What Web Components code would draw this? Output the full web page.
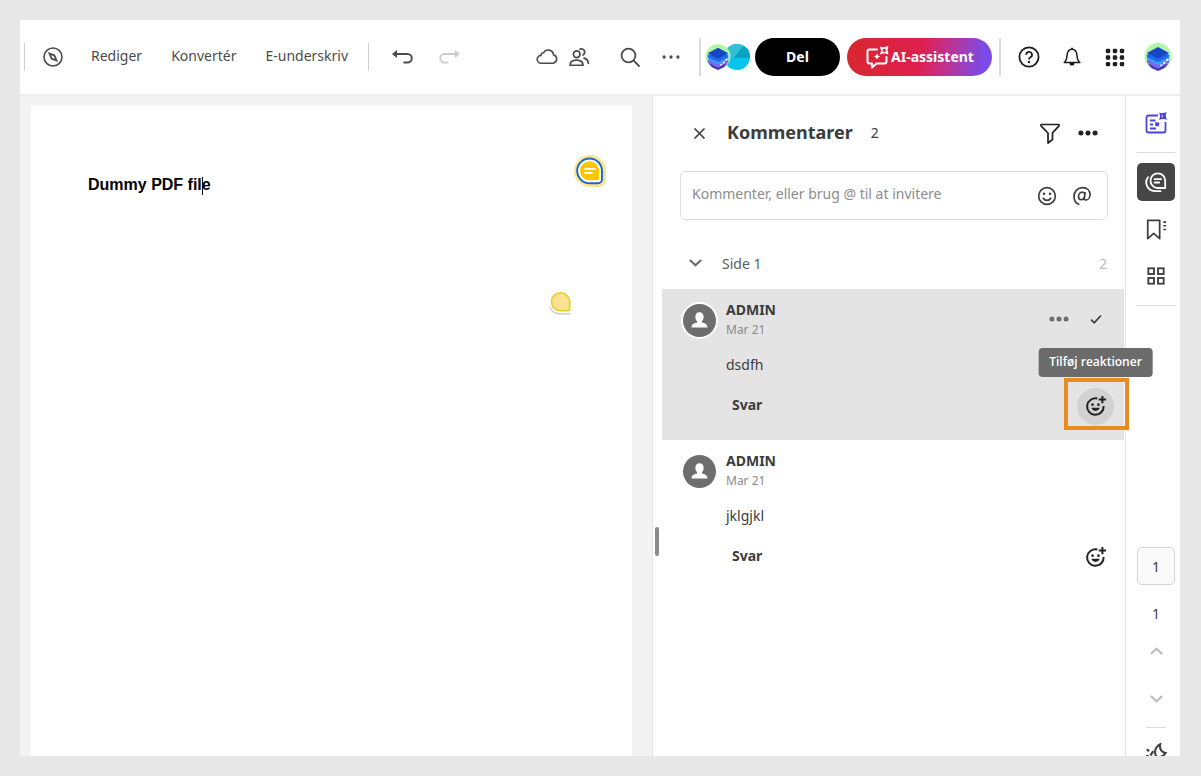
<!DOCTYPE html>
<html lang="da">
<head>
<meta charset="utf-8">
<meta name="viewport" content="width=device-width, initial-scale=1">
<title>Dummy PDF file</title>
<style>
    * { box-sizing: border-box; }
    body {
        margin: 0;
        background: #e8e8e8;
        color: #3c3c3c;
        font: 14px/20px "Noto Sans", "Open Sans", sans-serif;
    }
</style>
</head>
<body>
<pdf-app>
    <top-bar slot="top"></top-bar>
    <doc-viewer slot="viewer">Dummy PDF file</doc-viewer>
    <comment-panel slot="panel" heading="Kommentarer" count="2">
        <comment-card author="ADMIN" date="Mar 21" selected>dsdfh</comment-card>
        <comment-card author="ADMIN" date="Mar 21">jklgjkl</comment-card>
    </comment-panel>
    <side-rail slot="rail"></side-rail>
</pdf-app>

<script>
    const ICONS = {
        compass: `<g fill="none" stroke="currentColor" stroke-width="1.6"><circle cx="12" cy="12" r="9"/><path d="M8.500 8.500l4.800 1.800 2.200 5.200-4.800-1.800z" stroke-width="1.800"/></g>`,
        undo: `<path d="M6 9h11.500a3.900 3.900 0 0 1 0 8.600h-4" fill="none" stroke="currentColor" stroke-width="2"/><path d="M2 9l5-4v8z" fill="currentColor"/>`,
        redo: `<path d="M18 9H6.500a3.900 3.900 0 0 0 0 8.600h4" fill="none" stroke="currentColor" stroke-width="1.800"/><path d="M22 9l-5-4v8z" fill="currentColor"/>`,
        cloud: `<path d="M6.300 18.200a3.900 3.900 0 0 1-.4-7.800 3 3 0 0 1 2.700-2.600 5.300 5.300 0 0 1 9.900 1.900 4.400 4.400 0 0 1-.2 8.500z" fill="none" stroke="currentColor" stroke-width="1.600"/>`,
        people: `<g fill="none" stroke="currentColor" stroke-width="1.900" stroke-linecap="round"><circle cx="9.500" cy="9" r="3.600"/><path d="M2.200 21c0-3.600 3-5.600 7.100-5.600s7.100 2 7.100 5.600z" stroke-linejoin="round"/><path d="M13 3.600a3.500 3.500 0 1 1 3.400 6.200M17.600 13.300c2.800.8 4.300 2.600 4.600 5.700"/></g>`,
        search: `<g fill="none" stroke="currentColor" stroke-width="1.800" stroke-linecap="round"><circle cx="10.500" cy="10.500" r="6.900"/><path d="M15.700 15.700l5.300 5.300"/></g>`,
        dots: `<g fill="currentColor"><circle cx="4.500" cy="12" r="1.800"/><circle cx="12" cy="12" r="1.800"/><circle cx="19.500" cy="12" r="1.800"/></g>`,
        more: `<g fill="currentColor"><circle cx="3.500" cy="12" r="3"/><circle cx="12" cy="12" r="3"/><circle cx="20.500" cy="12" r="3"/></g>`,
        help: `<circle cx="12" cy="12" r="9.600" fill="none" stroke="currentColor" stroke-width="1.800"/><path d="M9.200 9.800a2.900 2.900 0 1 1 4.200 2.500c-1 .5-1.400 1-1.400 2.200" fill="none" stroke="currentColor" stroke-width="1.800"/><circle cx="12" cy="17" r="1.200" fill="currentColor"/>`,
        bell: `<path d="M3.500 18c2.500-2 2.800-4.400 3.100-7.600C6.900 6.400 9 3.600 12 3.600s5.100 2.800 5.400 6.800c.3 3.200.6 5.600 3.100 7.600z" fill="none" stroke="currentColor" stroke-width="1.700" stroke-linejoin="round"/><path d="M9.200 18.500h5.600a2.800 2.800 0 0 1-5.600 0z" fill="currentColor"/><path d="M12 2v1.600" stroke="currentColor" stroke-width="2"/>`,
        apps: `<g fill="currentColor"><rect x="2" y="3" width="4.800" height="4.800" rx="1.500"/><rect x="9.600" y="3" width="4.800" height="4.800" rx="1.500"/><rect x="17.200" y="3" width="4.800" height="4.800" rx="1.500"/><rect x="2" y="10.200" width="4.800" height="4.800" rx="1.500"/><rect x="9.600" y="10.200" width="4.800" height="4.800" rx="1.500"/><rect x="17.200" y="10.200" width="4.800" height="4.800" rx="1.500"/><rect x="2" y="17.400" width="4.800" height="4.800" rx="1.500"/><rect x="9.600" y="17.400" width="4.800" height="4.800" rx="1.500"/><rect x="17.200" y="17.400" width="4.800" height="4.800" rx="1.500"/></g>`,
        stack: `<circle cx="12" cy="11.500" r="11.500" fill="#b4f5a8"/><path d="M3.500 18l8.500-4 8.500 4-3 3.500-5.500 2.500-5.500-2.500z" fill="#4a30b8"/><path d="M2.500 15l9.500-4.500 9.500 4.500v2L12 22l-9.500-5z" fill="#7a68ee"/><path d="M2.500 12l9.500-4.500 9.500 4.500v2L12 19l-9.500-5z" fill="#3aa0fb"/><path d="M3.500 9.500h17l1 1V12L12 16.500 2.500 12v-1.500z" fill="#2168ee"/><path d="M2.500 8.500L12 3.500l9.500 5L12 13.500z" fill="#1646c4"/><path d="M16.500 16.800l1.800-.9v1.600l-1.800.9zM19 14.200l1.800-.9v1.600l-1.800.9zM14 18.700l1.600-.8v1.400l-1.600.8z" fill="#fff"/>`,
        pie: `<circle cx="12" cy="12" r="12" fill="#08c5ee"/><path d="M0 12A12 12 0 0 1 18 1.600L9 13z" fill="#35bfd6"/><path d="M9 13h15A12 12 0 0 0 18 1.600z" fill="#08a2c2"/>`,
        spark: `<g fill="none" stroke="currentColor" stroke-width="2" stroke-linecap="round" stroke-linejoin="round"><path d="M12 4.500H4.500a2 2 0 0 0-2 2v10a2 2 0 0 0 2 2H7v4l4.500-4h8a2 2 0 0 0 2-2V12"/><path d="M16 2.500q3 1.500 6.500-.5-2 3 0 6.500-3-2-6.500 0 2-3 0-6z" stroke-width="1.700"/></g><path d="M12 8.500q.7 2.300 3 3-2.300.7-3 3-.7-2.300-3-3 2.300-.7 3-3z" fill="currentColor"/>`,
        summary: `<g fill="none" stroke="currentColor" stroke-width="1.800"><path d="M14 4.500H4.500a2 2 0 0 0-2 2v13a2 2 0 0 0 2 2h15a2 2 0 0 0 2-2V11"/><path d="M6 9.500h5.500M6 13.500h3M6 17.500h6"/></g><path d="M15 1.500q3.500 1.500 7.500-.5-1.500 3.500.5 8-4-2-8 0 2-4 0-7.500zM11.500 11l4 .8-.8 3.700-3.700-.8z" fill="currentColor"/><path d="M18.200 4.200v2" stroke="#fff"/>`,
        close: `<path d="M4 4l16 16M20 4L4 20" fill="none" stroke="currentColor" stroke-width="2.600"/>`,
        filter: `<path d="M3 3.500h18v1.400l-6.500 7v6.600l-4.500 3.500v-10L3 4.900z" fill="none" stroke="currentColor" stroke-width="1.700" stroke-linejoin="round"/>`,
        smile: `<g fill="none" stroke="currentColor" stroke-width="2"><circle cx="12" cy="12" r="10"/><path d="M7.500 14.700a5.200 5.200 0 0 0 9 0" stroke-linecap="round"/></g><circle cx="8.400" cy="9.300" r="1.500" fill="currentColor"/><circle cx="15.600" cy="9.300" r="1.500" fill="currentColor"/>`,
        mention: `<path d="M15.800 8.200l-1 6c-.3 1.800.5 2.600 1.800 2.600 2.600 0 5-2.600 5-6.400 0-5-3.600-8.400-8.800-8.400C6.900 2 2.400 6.500 2.400 12.400c0 4.700 2.400 8.300 5.600 9.600M15.600 9.800c-.5-1.500-1.700-2.400-3.300-2.400-2.700 0-4.500 2.400-4.500 5.200 0 2.300 1.300 3.900 3.200 3.900 2 0 3.700-1.600 4.100-4" fill="none" stroke="currentColor" stroke-width="2" stroke-linecap="round"/>`,
        react: `<g fill="none" stroke="currentColor" stroke-width="2.200"><path d="M13.500 3.900A9 9 0 1 0 20.300 12"/><path d="M19 1v8M15 5h8"/></g><path d="M7 14h9a4.700 4.700 0 0 1-9 0z" fill="currentColor"/><circle cx="8.200" cy="10.500" r="1.400" fill="currentColor"/><circle cx="14.700" cy="10.500" r="1.400" fill="currentColor"/>`,
        down: `<path d="M3 8l9 8.500L21 8" fill="none" stroke="currentColor" stroke-width="3.600"/>`,
        up: `<path d="M3 16l9-8.500L21 16" fill="none" stroke="currentColor" stroke-width="3.600"/>`,
        check: `<path d="M3.500 13l5.500 5.500L20.500 6" fill="none" stroke="currentColor" stroke-width="3"/>`,
        person: `<circle cx="12" cy="12" r="12" fill="#6e6e6e"/><path d="M12 6c2 0 3 1.500 3 3.400 0 1.300-.5 2.400-1.200 3v1c2.200.5 4 1.200 4 3.600H6.200c0-2.400 1.800-3.100 4-3.600v-1C9.500 11.800 9 10.700 9 9.400 9 7.500 10 6 12 6z" fill="#fff"/>`,
        bubbles: `<g fill="none" stroke="currentColor" stroke-width="2"><path d="M14 2.500a8 8 0 1 0 0 16h8v-8a8 8 0 0 0-8-8z"/><path d="M10.500 8.800h7M10.500 12.500h5" stroke-linecap="round"/><path d="M3.300 6.800A9.500 9.500 0 0 0 10.500 22h6.500" stroke-linecap="round"/></g>`,
        bookmark: `<path d="M3 2.500h13v20l-6.500-5.700L3 22.500z" fill="none" stroke="currentColor" stroke-width="1.900" stroke-linejoin="round"/><path d="M20 4.500h3M20 8.500h3M20 12.500h3" stroke="currentColor" stroke-width="1.800"/>`,
        thumbs: `<g fill="none" stroke="currentColor" stroke-width="2.200"><rect x="2.800" y="2.800" width="6.800" height="6.800"/><rect x="14.400" y="2.800" width="6.800" height="6.800"/><rect x="2.800" y="14.400" width="6.800" height="6.800"/><rect x="14.400" y="14.400" width="6.800" height="6.800"/></g>`,
        night: `<path d="M12 15.500C9.500 9.500 12 4.500 16.500 2.500c-.8 5 1.200 8.500 6 9.500-2.500 3.800-7 5.500-10.500 3.500z" fill="none" stroke="currentColor" stroke-width="2.200"/><path d="M2 8l2.500 2M6 14.500L9 10M1 15.500h3" stroke="currentColor" stroke-width="2.400"/>`,
        note: `<path d="M17 1a16 16 0 0 0 0 32h9a7 7 0 0 0 7-7v-9A16 16 0 0 0 17 1z" fill="#fbe68e"/><path d="M16.500 4.500a12.300 12.300 0 0 0 0 24.700h8.500a4 4 0 0 0 4-4v-8.500A12.500 12.500 0 0 0 16.500 4.500z" fill="#fff" stroke="#1868d0" stroke-width="1.900"/><path d="M16.500 7.300a9.500 9.500 0 0 0 0 19h7.500a2.200 2.200 0 0 0 2.200-2.200v-7.500a9.700 9.700 0 0 0-9.700-9.300z" fill="#fbc800"/><path d="M12 14.800h10M12 18.800h7" stroke="#fff" stroke-width="1.800" stroke-linecap="round"/>`,
        notePale: `<path d="M5 19a10.500 10.500 0 0 0 10 8.500h11.500V25H15z" fill="#bdbdbd"/><path d="M16 3.800a11.200 11.200 0 1 0 0 22.400h11V15A11 11 0 0 0 16 3.800z" fill="#fff"/><path d="M16.500 5.800a9 9 0 0 0 0 18H24a1.700 1.700 0 0 0 1.700-1.700v-7.300a9.200 9.200 0 0 0-9.200-9z" fill="#fbe293" stroke="#e8cd28" stroke-width="1.600"/>`
    };

    const ICON_BUTTON = `
        button {
            display: inline-flex; align-items: center; justify-content: center;
            margin: 0; padding: 0; border: 0; background: none;
            color: inherit; font: inherit; cursor: pointer;
        }
    `;

    // <ui-icon name="bell" size="24">
    class UiIcon extends HTMLElement {
        constructor() {
            super();
            this.attachShadow({ mode: "open" });
        }
        connectedCallback() {
            const name = this.getAttribute("name");
            const size = this.getAttribute("size") || 24;
            const box = this.getAttribute("box") || 24;
            this.shadowRoot.innerHTML = `
                <style>
                    :host { display: inline-flex; flex: none; }
                    svg { display: block; }
                </style>
                <svg width="${size}" height="${size}" viewBox="0 0 ${box} ${box}" aria-hidden="true">${ICONS[name] || ""}</svg>
            `;
        }
    }

    class PdfApp extends HTMLElement {
        constructor() {
            super();
            this.attachShadow({ mode: "open" });
            this.shadowRoot.innerHTML = `
                <style>
                    :host {
                        display: flex; height: 100vh; padding: 20px 21px 20px 20px;
                        box-sizing: border-box;
                    }
                    .window {
                        flex: 1; min-width: 0; display: flex; flex-direction: column;
                        background: #fff; overflow: hidden;
                    }
                    main {
                        flex: 1; min-height: 0; display: grid;
                        grid-template-columns: minmax(0, 1fr) 473px 55px;
                    }
                </style>
                <div class="window">
                    <slot name="top"></slot>
                    <main>
                        <slot name="viewer"></slot>
                        <slot name="panel"></slot>
                        <slot name="rail"></slot>
                    </main>
                </div>
            `;
        }
    }

    class TopBar extends HTMLElement {
        constructor() {
            super();
            this.attachShadow({ mode: "open" });
        }
        connectedCallback() {
            const links = ["Rediger", "Konvertér", "E-underskriv"];
            this.shadowRoot.innerHTML = `
                <style>
                    :host { display: block; border-bottom: 2px solid #eee; }
                    ${ICON_BUTTON}
                    header {
                        display: flex; align-items: center; justify-content: space-between;
                        height: 74px; padding: 0 1px 0 4px;
                    }
                    .group { display: flex; align-items: center; }
                    nav { display: flex; gap: 29px; padding: 0 20px 2px 18px; }
                    a { color: #4b4b4b; text-decoration: none; }
                    .line { width: 1px; height: 28px; background: #d0d0d0; }
                    .line.tall { width: 2px; height: 38px; background: #dadada; }
                    .icon { width: 40px; height: 40px; color: #4b4b4b; }
                    .start { margin-left: 8px; }
                    .undo { margin-left: 13px; }
                    .pale { color: #ccc; margin-left: 8px; }
                    .narrow { width: 32px; }
                    .find { margin-left: 15px; }
                    .menu { margin: 0 8px 0 1px; }
                    .wide { width: 43px; color: #1e1e1e; }
                    .wide.first { margin-left: 6px; }
                    .faces { display: flex; padding: 0 5px 0 4px; }
                    .faces ui-icon:first-child { position: relative; z-index: 1; margin-right: -7px; }
                    .pill {
                        height: 38px; border-radius: 19px; color: #fff;
                        font-weight: 700; gap: 2px;
                    }
                    .share { width: 85px; background: #000; margin-right: 7px; padding-bottom: 1px; }
                    .ai {
                        width: 145px; margin-right: 7px;
                        background: linear-gradient(100deg, #d7282f 0%, #df1f4d 50%, #c62f85 65%, #7c4ae6 92%);
                    }
                </style>
                <header>
                    <div class="group">
                        <span class="line"></span>
                        <button class="icon start" aria-label="Udforsk"><ui-icon name="compass"></ui-icon></button>
                        <nav>${links.map(t => `<a href="#">${t}</a>`).join("")}</nav>
                        <span class="line"></span>
                        <button class="icon undo" aria-label="Fortryd"><ui-icon name="undo"></ui-icon></button>
                        <button class="icon pale" aria-label="Gendan"><ui-icon name="redo"></ui-icon></button>
                    </div>
                    <div class="group">
                        <button class="icon narrow" aria-label="Sky"><ui-icon name="cloud"></ui-icon></button>
                        <button class="icon narrow" aria-label="Personer"><ui-icon name="people" size="22"></ui-icon></button>
                        <button class="icon find" aria-label="Søg"><ui-icon name="search" size="24"></ui-icon></button>
                        <button class="icon menu" aria-label="Mere"><ui-icon name="dots" size="22"></ui-icon></button>
                        <span class="line tall"></span>
                        <span class="faces"><ui-icon name="stack" size="26"></ui-icon><ui-icon name="pie" size="26"></ui-icon></span>
                        <button class="pill share">Del</button>
                        <button class="pill ai"><ui-icon name="spark" size="24"></ui-icon>AI-assistent</button>
                        <span class="line tall"></span>
                        <button class="icon wide first" aria-label="Hjælp"><ui-icon name="help"></ui-icon></button>
                        <button class="icon wide" aria-label="Meddelelser"><ui-icon name="bell" size="22"></ui-icon></button>
                        <button class="icon wide" aria-label="Apps"><ui-icon name="apps" size="22"></ui-icon></button>
                        <button class="icon wide" aria-label="Konto"><ui-icon name="stack" size="28"></ui-icon></button>
                    </div>
                </header>
            `;
        }
    }

    class DocViewer extends HTMLElement {
        constructor() {
            super();
            this.attachShadow({ mode: "open" });
            this.shadowRoot.innerHTML = `
                <style>
                    :host {
                        display: flex; min-width: 0; padding: 10px 20px 0 11px;
                        background: #f3f3f3; box-sizing: border-box;
                    }
                    ${ICON_BUTTON}
                    article {
                        position: relative; flex: 1; background: #fff;
                        padding: 68px 57px; box-sizing: border-box;
                    }
                    h1 {
                        position: relative; display: inline-block; margin: 0;
                        color: #000; font: bold 16px/22px "Liberation Sans", Arial, sans-serif;
                    }
                    .caret { position: absolute; right: 8px; top: 3px; width: 1px; height: 18px; background: #000; }
                    .pin { position: absolute; }
                    .active { right: 25px; top: 48px; }
                    .idle { right: 56px; top: 181px; }
                </style>
                <article>
                    <h1><slot></slot><span class="caret"></span></h1>
                    <button class="pin active" aria-label="Kommentar 1"><ui-icon name="note" size="34" box="34"></ui-icon></button>
                    <button class="pin idle" aria-label="Kommentar 2"><ui-icon name="notePale" size="32" box="32"></ui-icon></button>
                </article>
            `;
        }
    }

    class CommentPanel extends HTMLElement {
        constructor() {
            super();
            this.attachShadow({ mode: "open" });
        }
        connectedCallback() {
            const count = this.getAttribute("count");
            this.shadowRoot.innerHTML = `
                <style>
                    :host {
                        display: grid; grid-template-columns: 9px minmax(0, 1fr);
                        border-left: 1px solid #e4e4e4; box-sizing: border-box;
                    }
                    ${ICON_BUTTON}
                    .resize { display: flex; flex-direction: column; justify-content: flex-end; padding: 0 2px 200px; }
                    .resize span { width: 4px; height: 29px; border-radius: 2px; background: #8a8a8a; }
                    section { padding-right: 1px; }
                    .head { display: flex; align-items: center; padding: 18px 17px 19px 18px; }
                    .head button { width: 38px; height: 38px; color: #222; }
                    .head .close { margin-right: 9px; color: #3c3c3c; }
                    h2 { margin: 0 18px 2px 0; font: bold 18px/24px "Noto Sans", sans-serif; }
                    .count { flex: 1; }
                    .compose {
                        display: flex; align-items: center; height: 49px; margin: 0 16px 0 18px;
                        padding: 0 8px 0 11px; border: 1px solid #dedede; border-radius: 5px;
                        box-sizing: border-box;
                    }
                    input {
                        flex: 1; min-width: 0; border: 0; padding: 0 0 4px; outline: 0;
                        background: none; color: inherit; font: inherit;
                    }
                    input::placeholder { color: #8c8c8c; opacity: 1; }
                    .compose button { width: 35px; height: 35px; }
                    .page { display: flex; align-items: center; height: 69px; padding: 19px 17px 0 22px; box-sizing: border-box; color: #5e5e5e; }
                    .page button { width: 22px; height: 22px; margin: 0 16px 4px 0; color: #6e6e6e; }
                    .page .total { margin-left: auto; color: #bcbcbc; }
                </style>
                <div class="resize"><span></span></div>
                <section>
                    <div class="head">
                        <button class="close" aria-label="Luk"><ui-icon name="close" size="15"></ui-icon></button>
                        <h2>${this.getAttribute("heading")}</h2>
                        <span class="count">${count}</span>
                        <button aria-label="Filtrer"><ui-icon name="filter" size="24"></ui-icon></button>
                        <button aria-label="Flere"><ui-icon name="more" size="20"></ui-icon></button>
                    </div>
                    <div class="compose">
                        <input type="text" aria-label="Ny kommentar" placeholder="Kommenter, eller brug @ til at invitere">
                        <button aria-label="Emoji"><ui-icon name="smile" size="20"></ui-icon></button>
                        <button aria-label="Omtal"><ui-icon name="mention" size="20"></ui-icon></button>
                    </div>
                    <div class="page">
                        <button aria-label="Fold sammen"><ui-icon name="down" size="15"></ui-icon></button>
                        <span>Side 1</span>
                        <span class="total">${count}</span>
                    </div>
                    <slot></slot>
                </section>
            `;
        }
    }

    class CommentCard extends HTMLElement {
        constructor() {
            super();
            this.attachShadow({ mode: "open" });
        }
        connectedCallback() {
            const selected = this.hasAttribute("selected");
            this.shadowRoot.innerHTML = `
                <style>
                    :host { display: block; padding: 11px 10px 15px 21px; box-sizing: border-box; }
                    :host([selected]) { background: #e4e4e4; }
                    ${ICON_BUTTON}
                    .card { display: grid; grid-template-columns: 33px minmax(0, 1fr); column-gap: 10px; }
                    .face { align-self: center; border-radius: 50%; }
                    :host([selected]) .face { box-shadow: 0 0 0 2px #fff; }
                    .top { display: flex; justify-content: space-between; align-items: flex-start; }
                    .name { font-weight: 700; line-height: 20px; }
                    .date { color: #8a8a8a; font-size: 12px; line-height: 20px; }
                    .tools { display: flex; gap: 1px; }
                    .tools button { width: 36px; height: 38px; color: #6e6e6e; }
                    .tools .done { color: #3c3c3c; }
                    p { grid-column: 2; margin: 15px 0 12px; }
                    .foot { grid-column: 2; display: flex; justify-content: space-between; align-items: center; height: 38px; }
                    .reply { margin: 0 0 2px 6px; font-weight: 700; }
                    .react { position: relative; display: flex; }
                    .react button { width: 37px; height: 37px; border-radius: 50%; color: #222; }
                    :host([selected]) .react button { background: #d2d2d2; }
                    .frame {
                        position: absolute; inset: -10px -15px -5px -13px;
                        border: 4px solid #e98b1f; pointer-events: none; z-index: 2;
                    }
                    .tip {
                        position: absolute; left: 50%; bottom: 48px; transform: translateX(-50%);
                        padding: 5px 11px 6px; border-radius: 4px; background: #6b6b6b; color: #fff;
                        font: 600 12px/18px "Open Sans", sans-serif; white-space: nowrap; z-index: 1;
                    }
                </style>
                <div class="card">
                    <ui-icon class="face" name="person" size="33"></ui-icon>
                    <div class="top">
                        <div>
                            <div class="name">${this.getAttribute("author")}</div>
                            <div class="date">${this.getAttribute("date")}</div>
                        </div>
                        ${selected ? `<div class="tools">
                            <button aria-label="Indstillinger"><ui-icon name="more" size="20"></ui-icon></button>
                            <button class="done" aria-label="Løs"><ui-icon name="check" size="14"></ui-icon></button>
                        </div>` : ""}
                    </div>
                    <p><slot></slot></p>
                    <div class="foot">
                        <button class="reply">Svar</button>
                        <span class="react">
                            <button aria-label="Tilføj reaktioner"><ui-icon name="react" size="22"></ui-icon></button>
                            ${selected ? `<span class="tip" role="tooltip">Tilføj reaktioner</span><span class="frame"></span>` : ""}
                        </span>
                    </div>
                </div>
            `;
        }
    }

    class SideRail extends HTMLElement {
        constructor() {
            super();
            this.attachShadow({ mode: "open" });
        }
        connectedCallback() {
            this.shadowRoot.innerHTML = `
                <style>
                    :host {
                        display: flex; flex-direction: column; justify-content: space-between;
                        border-left: 1px solid #e4e4e4; box-sizing: border-box; min-height: 0;
                    }
                    ${ICON_BUTTON}
                    .group { display: flex; flex-direction: column; align-items: center; padding: 0 5px 0 11px; }
                    button { width: 38px; height: 38px; border-radius: 5px; }
                    .tools { gap: 9px; padding-top: 8px; }
                    .tools button:first-child { color: #4b46e0; }
                    hr { width: 38px; margin: 1px 0; border: 0; border-top: 1px solid #dcdcdc; }
                    hr.short { width: 20px; margin: 10px 0 6px; }
                    .on { background: #464646; color: #fff; }
                    input {
                        width: 38px; height: 38px; padding: 0; border: 1px solid #d4d4d4; border-radius: 5px;
                        box-sizing: border-box; background: #fafafa; text-align: center; font: inherit; color: inherit;
                    }
                    .total { margin: 19px 0 8px; line-height: 20px; }
                    .step { color: #bcbcbc; margin-bottom: 9px; }
                    .step:last-of-type { margin: 0; }
                    .cut { height: 22px; overflow: hidden; }
                </style>
                <div class="group tools">
                    <button aria-label="AI-oversigt"><ui-icon name="summary" size="24"></ui-icon></button>
                    <hr>
                    <button class="on" aria-label="Kommentarer"><ui-icon name="bubbles" size="22"></ui-icon></button>
                    <button aria-label="Bogmærker"><ui-icon name="bookmark" size="22"></ui-icon></button>
                    <button aria-label="Miniaturer"><ui-icon name="thumbs" size="20"></ui-icon></button>
                    <hr>
                </div>
                <div class="group">
                    <input type="text" aria-label="Sidetal" value="1">
                    <span class="total">1</span>
                    <button class="step" aria-label="Forrige side"><ui-icon name="up" size="15"></ui-icon></button>
                    <button class="step" aria-label="Næste side"><ui-icon name="down" size="15"></ui-icon></button>
                    <hr class="short">
                    <div class="cut"><button aria-label="Nattilstand"><ui-icon name="night" size="22"></ui-icon></button></div>
                </div>
            `;
        }
    }

    customElements.define("ui-icon", UiIcon);
    customElements.define("pdf-app", PdfApp);
    customElements.define("top-bar", TopBar);
    customElements.define("doc-viewer", DocViewer);
    customElements.define("comment-panel", CommentPanel);
    customElements.define("comment-card", CommentCard);
    customElements.define("side-rail", SideRail);
</script>
</body>
</html>
